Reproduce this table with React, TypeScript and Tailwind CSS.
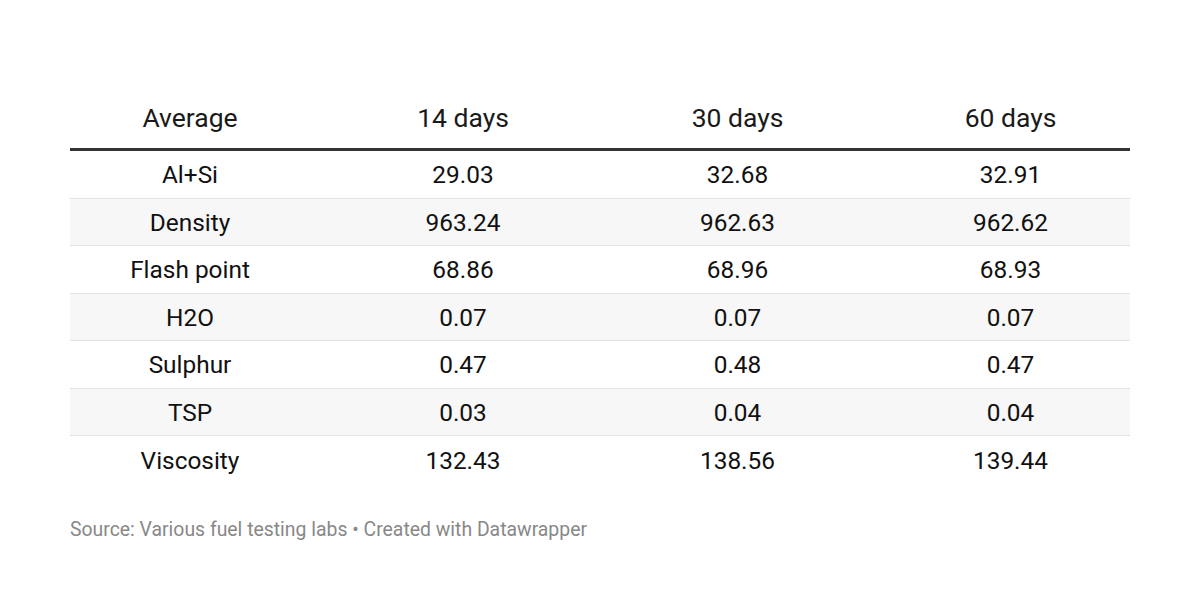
import React from "react";

const rows: [string, string, string, string][] = [
  ["Al+Si", "29.03", "32.68", "32.91"],
  ["Density", "963.24", "962.63", "962.62"],
  ["Flash point", "68.86", "68.96", "68.93"],
  ["H2O", "0.07", "0.07", "0.07"],
  ["Sulphur", "0.47", "0.48", "0.47"],
  ["TSP", "0.03", "0.04", "0.04"],
  ["Viscosity", "132.43", "138.56", "139.44"],
];

export default function App() {
  return (
    <div
      className="w-[1200px] h-[612px] bg-white overflow-hidden"
      style={{ fontFamily: "Roboto, 'Liberation Sans', sans-serif" }}
    >
      <div className="ml-[70px] w-[1060px] pt-[103px]">
        <div className="grid grid-cols-[256px_274px_275px_255px] border-b-[3px] border-[#333333] pb-[15px] text-[26.5px] leading-[30px] text-[#1a1a1a]">
          <div className="text-center pr-[16px]">Average</div>
          <div className="text-center">14 days</div>
          <div className="text-center">30 days</div>
          <div className="text-center pl-[16px]">60 days</div>
        </div>
        {rows.map((r, i) => (
          <div
            key={r[0]}
            className={
              "grid grid-cols-[256px_274px_275px_255px] items-center h-[47.5px] pt-[3px] text-[24.4px] text-[#111111] " +
              (i % 2 === 1 ? "bg-[#f7f7f7] " : "") +
              (i < rows.length - 1 ? "border-b border-[#e3e3e3]" : "")
            }
          >
            <div className="text-center pr-[16px]">{r[0]}</div>
            <div className="text-center">{r[1]}</div>
            <div className="text-center">{r[2]}</div>
            <div className="text-center pl-[16px]">{r[3]}</div>
          </div>
        ))}
        <div className="mt-[34px] text-[19.4px] leading-[24px] text-[#888888]">
          Source: Various fuel testing labs • Created with Datawrapper
        </div>
      </div>
    </div>
  );
}
